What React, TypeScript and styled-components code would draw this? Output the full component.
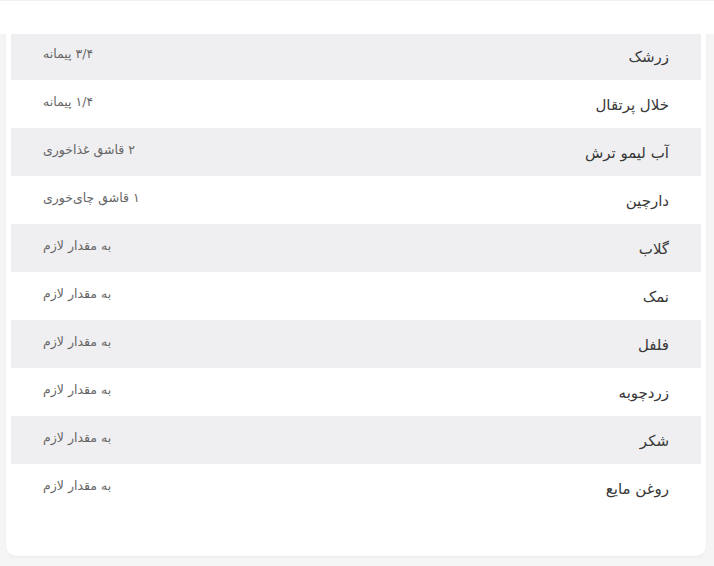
import React from "react";
import styled, { createGlobalStyle } from "styled-components";

const Global = createGlobalStyle`
  html, body { margin: 0; padding: 0; }
  body {
    background: #f5f5f6;
    font-family: "DejaVu Sans", "Noto Sans", sans-serif;
  }
`;

const TopBar = styled.header`
  position: fixed;
  top: 0;
  left: 0;
  right: 0;
  height: 33px;
  background: #ffffff;
  border-top: 1px solid #f0f0f0;
  z-index: 2;
`;

const Page = styled.main`
  padding: 32px 8px 10px 6px;
`;

const Card = styled.section`
  background: #ffffff;
  border-radius: 0 0 10px 10px;
  padding: 0 5px 44px 5px;
  box-shadow: 0 1px 3px rgba(0, 0, 0, 0.05);
`;

const List = styled.ul`
  list-style: none;
  margin: 0;
  padding: 0;
  direction: rtl;
`;

const Row = styled.li<{ $shaded: boolean }>`
  height: 48px;
  display: flex;
  align-items: center;
  justify-content: space-between;
  padding: 0 32px;
  background: ${(p) => (p.$shaded ? "#efeff1" : "#ffffff")};
`;

const Name = styled.span`
  font-size: 15px;
  color: #383838;
  line-height: 20px;
  margin-top: 1px;
`;

const Amount = styled.span`
  font-size: 12.5px;
  color: #666666;
  line-height: 16px;
  margin-bottom: 5px;
`;

const items: [string, string][] = [
  ["زرشک", "۳/۴ پیمانه"],
  ["خلال پرتقال", "۱/۴ پیمانه"],
  ["آب لیمو ترش", "۲ قاشق غذاخوری"],
  ["دارچین", "۱ قاشق چای‌خوری"],
  ["گلاب", "به مقدار لازم"],
  ["نمک", "به مقدار لازم"],
  ["فلفل", "به مقدار لازم"],
  ["زردچوبه", "به مقدار لازم"],
  ["شکر", "به مقدار لازم"],
  ["روغن مایع", "به مقدار لازم"],
];

export default function App() {
  return (
    <>
      <Global />
      <TopBar />
      <Page>
        <Card>
          <List>
            {items.map(([name, amount], i) => (
              <Row key={name} $shaded={i % 2 === 0}>
                <Name>{name}</Name>
                <Amount>{amount}</Amount>
              </Row>
            ))}
          </List>
        </Card>
      </Page>
    </>
  );
}
